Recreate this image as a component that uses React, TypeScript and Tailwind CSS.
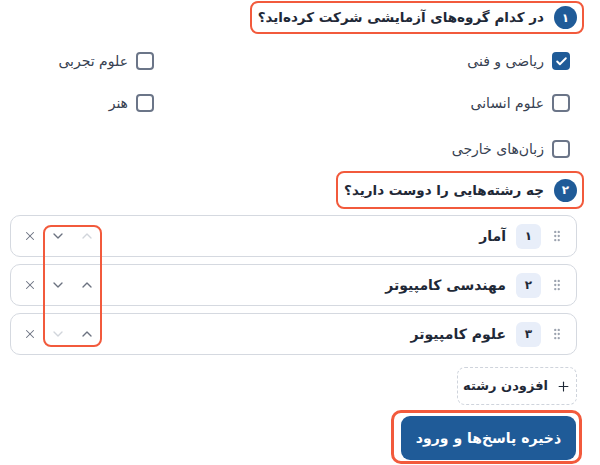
import { Check, ChevronDown, ChevronUp, GripVertical, Plus, X } from "lucide-react";

const GROUPS = [
  { label: "ریاضی و فنی", checked: true },
  { label: "علوم تجربی", checked: false },
  { label: "علوم انسانی", checked: false },
  { label: "هنر", checked: false },
  { label: "زبان‌های خارجی", checked: false },
];

const FIELDS = ["آمار", "مهندسی کامپیوتر", "علوم کامپیوتر"];
const DIGITS = ["۱", "۲", "۳"];

function Badge({ n }: { n: string }) {
  return (
    <span className="flex h-[23px] w-[23px] shrink-0 items-center justify-center rounded-full bg-[#1f5b98] text-[12px] font-bold text-white">
      {n}
    </span>
  );
}

function Box({ checked }: { checked: boolean }) {
  return checked ? (
    <span className="flex h-[18px] w-[18px] items-center justify-center rounded-[4px] bg-[#1f5b98]">
      <Check size={13} strokeWidth={3.5} className="text-white" />
    </span>
  ) : (
    <span className="h-[18px] w-[18px] rounded-[4px] border-2 border-[#6b7588]" />
  );
}

export default function App() {
  return (
    <div
      dir="rtl"
      className="relative h-[465px] w-[600px] overflow-hidden bg-white pl-[10px] pr-[23px] font-['DejaVu_Sans',sans-serif] text-[#1f2937]"
    >
      {/* Question 1 */}
      <div className="pt-[1px]">
        <div className="-mr-[7px] inline-flex h-[33px] items-center gap-[10px] rounded-[8px] border-2 border-[#f25a3c] pl-[6px] pr-[5px]">
          <Badge n="۱" />
          <span className="text-[13.5px] font-bold">در کدام گروه‌های آزمایشی شرکت کرده‌اید؟</span>
        </div>
      </div>

      <div className="mt-[15px] grid grid-cols-[416px_auto] gap-y-[18px] pr-[7px]">
        {GROUPS.map((g, i) => (
          <label key={i} className={`flex h-[24px] items-center gap-[8px] ${i === 4 ? "mt-[4px]" : ""}`}>
            <Box checked={g.checked} />
            <span className="text-[14px] text-[#374151]">{g.label}</span>
          </label>
        ))}
      </div>

      {/* Question 2 */}
      <div className="mt-[10px]">
        <div className="-mr-[7px] inline-flex h-[38px] items-center gap-[10px] rounded-[8px] border-2 border-[#f25a3c] pl-[6px] pr-[5px]">
          <Badge n="۲" />
          <span className="text-[13.5px] font-bold">چه رشته‌هایی را دوست دارید؟</span>
        </div>
      </div>

      <div className="mt-[6px] flex flex-col gap-[7px]">
        {FIELDS.map((f, i) => (
          <div key={i} className="flex h-[42px] items-center rounded-[10px] border border-[#d5d9e0] pl-[12px] pr-[12px]">
            <GripVertical size={14} className="shrink-0 text-[#9ca3af]" />
            <span className="mr-[9px] flex h-[25px] w-[25px] items-center justify-center rounded-[6px] bg-[#e8eef9] text-[12px] font-bold text-[#1f2937]">
              {DIGITS[i]}
            </span>
            <span className="mr-[10px] text-[14px] font-bold">{f}</span>
            <div className="mr-auto flex items-center gap-[13px]">
              <ChevronUp size={16} strokeWidth={2} className={i === 0 ? "text-[#d1d5db]" : "text-[#6b7280]"} />
              <ChevronDown size={16} strokeWidth={2} className={i === 2 ? "text-[#d1d5db]" : "text-[#6b7280]"} />
              <X size={14} strokeWidth={1.8} className="text-[#6b7280]" />
            </div>
          </div>
        ))}
      </div>

      <div className="mt-[12px] flex">
        <button className="flex h-[38px] w-[120px] items-center justify-center gap-[8px] rounded-[8px] border border-dashed border-[#cfd4dc] text-[13px] font-bold text-[#1f2937]">
          <Plus size={15} strokeWidth={1.8} />
          افزودن رشته
        </button>
      </div>

      <div className="-mr-[5px] mt-[5px] flex">
        <div className="rounded-[10px] border-[3px] border-[#f25a3c] pb-[1px] pl-[7px] pr-[3px] pt-[3px]">
          <button className="flex h-[44px] w-[175px] items-center justify-center rounded-[9px] bg-[#1f5b98] text-[14px] font-bold text-white">
            ذخیره پاسخ‌ها و ورود
          </button>
        </div>
      </div>

      {/* annotation around reorder arrows */}
      <div className="pointer-events-none absolute left-[43px] top-[225px] h-[122px] w-[59px] rounded-[8px] border-2 border-[#f25a3c]" />
    </div>
  );
}
